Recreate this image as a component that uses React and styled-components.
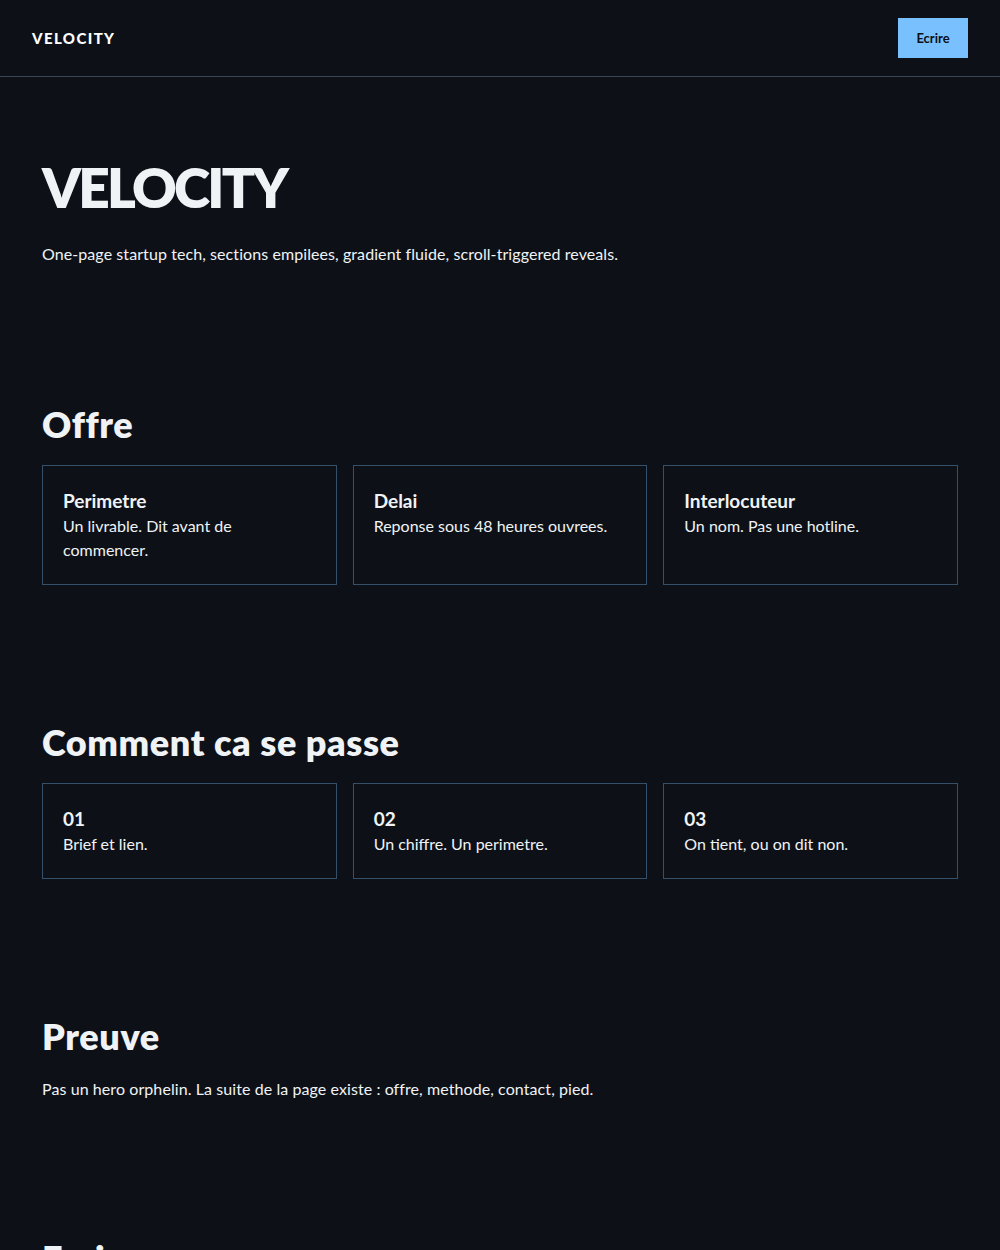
import React from 'react'
import styled, { createGlobalStyle } from 'styled-components'

const Global = createGlobalStyle`
  html, body {
    margin: 0;
    padding: 0;
    background: #0d1117;
  }
  body {
    color: #f0f3f6;
    font-family: Lato, "Noto Sans", sans-serif;
  }
  * { box-sizing: border-box; }
`

const Page = styled.div`
  min-height: 1250px;
  background: #0d1117;
`

const Header = styled.header`
  height: 77px;
  display: flex;
  align-items: center;
  justify-content: space-between;
  padding: 0 32px;
  border-bottom: 1px solid #3b4655;
`

const Logo = styled.div`
  font-size: 15px;
  font-weight: 900;
  letter-spacing: 1.4px;
  color: #ffffff;
`

const Button = styled.button`
  width: 70px;
  height: 40px;
  border: 0;
  background: #79c0ff;
  color: #0d1117;
  font-family: inherit;
  font-size: 13px;
  font-weight: 700;
  cursor: pointer;
`

const Main = styled.main`
  padding: 0 42px;
`

const Hero = styled.section`
  padding: 80px 0 70px;
`

const Title = styled.h1`
  margin: 0 0 24px;
  font-size: 55px;
  line-height: 61px;
  font-weight: 800;
  letter-spacing: -2.8px;
  color: #f0f3f6;
`

const Text = styled.p`
  margin: ${p => p.$top || 0}px 0 0;
  font-size: 16px;
  line-height: 24px;
  letter-spacing: 0.08px;
`

const Section = styled.section`
  padding: 69px 0;
`

const Heading = styled.h2`
  margin: 0 0 22px;
  font-size: 36px;
  line-height: 38px;
  font-weight: 800;
  letter-spacing: 0.6px;
  color: #f0f3f6;
`

const Grid = styled.div`
  display: grid;
  grid-template-columns: repeat(3, 1fr);
  gap: 16px;
`

const Card = styled.div`
  border: 1px solid #34506b;
  padding: 22px 20px;
`

const CardTitle = styled.div`
  font-size: 19px;
  line-height: 26px;
  font-weight: 700;
`

const CardText = styled.div`
  font-size: 16px;
  line-height: 24px;
  max-width: ${p => p.$narrow ? '190px' : 'none'};
`

const offre = [
  ['Perimetre', 'Un livrable. Dit avant de commencer.', true],
  ['Delai', 'Reponse sous 48 heures ouvrees.'],
  ['Interlocuteur', 'Un nom. Pas une hotline.'],
]

const steps = [
  ['01', 'Brief et lien.'],
  ['02', 'Un chiffre. Un perimetre.'],
  ['03', 'On tient, ou on dit non.'],
]

export default function App() {
  return (
    <Page>
      <Global />
      <Header>
        <Logo>VELOCITY</Logo>
        <Button>Ecrire</Button>
      </Header>
      <Main>
        <Hero>
          <Title>VELOCITY</Title>
          <Text>One-page startup tech, sections empilees, gradient fluide, scroll-triggered reveals.</Text>
        </Hero>
        <Section>
          <Heading>Offre</Heading>
          <Grid>
            {offre.map(([t, d, n]) => (
              <Card key={t}>
                <CardTitle>{t}</CardTitle>
                <CardText $narrow={n}>{d}</CardText>
              </Card>
            ))}
          </Grid>
        </Section>
        <Section>
          <Heading>Comment ca se passe</Heading>
          <Grid>
            {steps.map(([t, d]) => (
              <Card key={t}>
                <CardTitle>{t}</CardTitle>
                <CardText>{d}</CardText>
              </Card>
            ))}
          </Grid>
        </Section>
        <Section>
          <Heading>Preuve</Heading>
          <Text $top={6}>Pas un hero orphelin. La suite de la page existe : offre, methode, contact, pied.</Text>
        </Section>
        <Section>
          <Heading>Ecrire</Heading>
        </Section>
      </Main>
    </Page>
  )
}
